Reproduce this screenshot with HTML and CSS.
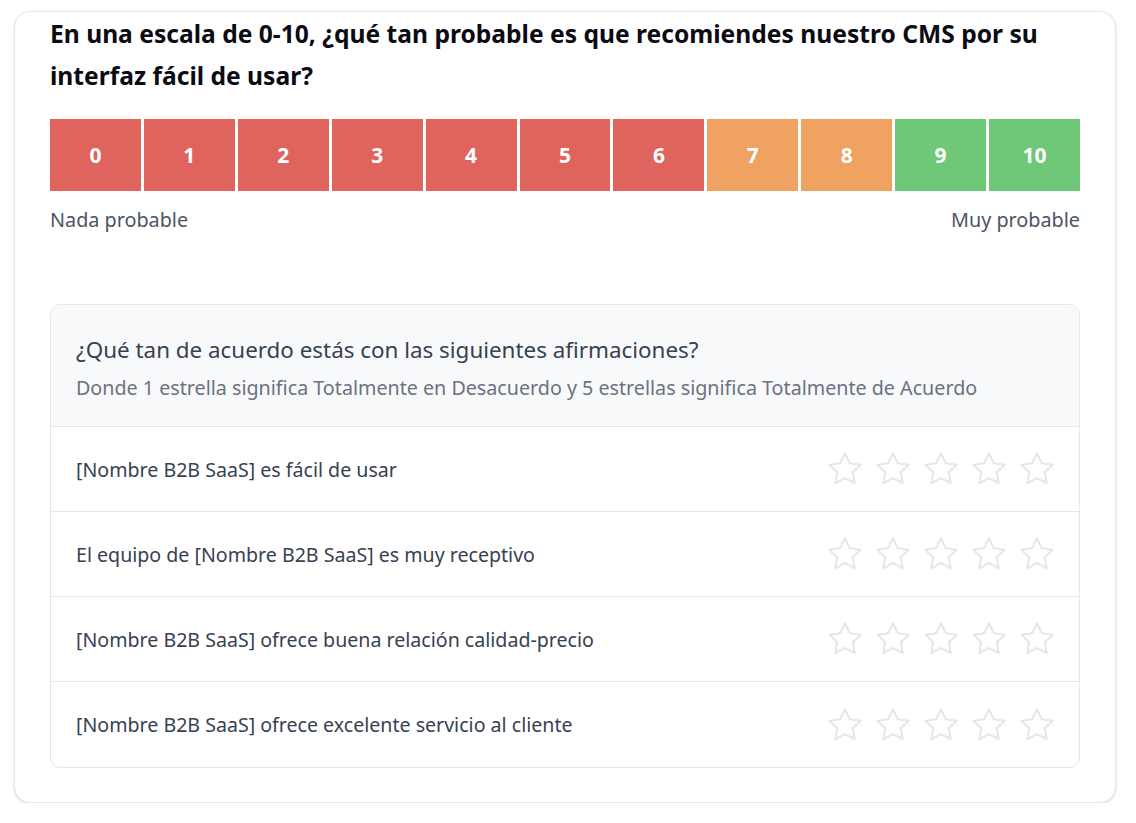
FILE: index.html
```html
<!DOCTYPE html>
<html lang="es">
<head>
<meta charset="utf-8">
<link rel="stylesheet" href="styles.css">
</head>
<body>
<div class="card">
  <h1 class="title">En una escala de 0-10, ¿qué tan probable es que recomiendes nuestro CMS por su interfaz fácil de usar?</h1>
  <div class="scale">
    <button class="score red">0</button>
    <button class="score red">1</button>
    <button class="score red">2</button>
    <button class="score red">3</button>
    <button class="score red">4</button>
    <button class="score red">5</button>
    <button class="score red">6</button>
    <button class="score orange">7</button>
    <button class="score orange">8</button>
    <button class="score green">9</button>
    <button class="score green">10</button>
  </div>
  <div class="scale-labels">
    <span>Nada probable</span>
    <span>Muy probable</span>
  </div>

  <div class="matrix">
    <div class="matrix-head">
      <div class="matrix-title">¿Qué tan de acuerdo estás con las siguientes afirmaciones?</div>
      <div class="matrix-sub">Donde 1 estrella significa Totalmente en Desacuerdo y 5 estrellas significa Totalmente de Acuerdo</div>
    </div>
    <div class="row">
      <span class="row-text">[Nombre B2B SaaS] es fácil de usar</span>
      <div class="stars">
        <svg class="star" viewBox="0 0 24 24"><path d="M12 2.6l2.9 5.9 6.5.9-4.7 4.6 1.1 6.5L12 17.4l-5.8 3.1 1.1-6.5-4.7-4.6 6.5-.9z"/></svg>
        <svg class="star" viewBox="0 0 24 24"><path d="M12 2.6l2.9 5.9 6.5.9-4.7 4.6 1.1 6.5L12 17.4l-5.8 3.1 1.1-6.5-4.7-4.6 6.5-.9z"/></svg>
        <svg class="star" viewBox="0 0 24 24"><path d="M12 2.6l2.9 5.9 6.5.9-4.7 4.6 1.1 6.5L12 17.4l-5.8 3.1 1.1-6.5-4.7-4.6 6.5-.9z"/></svg>
        <svg class="star" viewBox="0 0 24 24"><path d="M12 2.6l2.9 5.9 6.5.9-4.7 4.6 1.1 6.5L12 17.4l-5.8 3.1 1.1-6.5-4.7-4.6 6.5-.9z"/></svg>
        <svg class="star" viewBox="0 0 24 24"><path d="M12 2.6l2.9 5.9 6.5.9-4.7 4.6 1.1 6.5L12 17.4l-5.8 3.1 1.1-6.5-4.7-4.6 6.5-.9z"/></svg>
      </div>
    </div>
    <div class="row">
      <span class="row-text">El equipo de [Nombre B2B SaaS] es muy receptivo</span>
      <div class="stars">
        <svg class="star" viewBox="0 0 24 24"><path d="M12 2.6l2.9 5.9 6.5.9-4.7 4.6 1.1 6.5L12 17.4l-5.8 3.1 1.1-6.5-4.7-4.6 6.5-.9z"/></svg>
        <svg class="star" viewBox="0 0 24 24"><path d="M12 2.6l2.9 5.9 6.5.9-4.7 4.6 1.1 6.5L12 17.4l-5.8 3.1 1.1-6.5-4.7-4.6 6.5-.9z"/></svg>
        <svg class="star" viewBox="0 0 24 24"><path d="M12 2.6l2.9 5.9 6.5.9-4.7 4.6 1.1 6.5L12 17.4l-5.8 3.1 1.1-6.5-4.7-4.6 6.5-.9z"/></svg>
        <svg class="star" viewBox="0 0 24 24"><path d="M12 2.6l2.9 5.9 6.5.9-4.7 4.6 1.1 6.5L12 17.4l-5.8 3.1 1.1-6.5-4.7-4.6 6.5-.9z"/></svg>
        <svg class="star" viewBox="0 0 24 24"><path d="M12 2.6l2.9 5.9 6.5.9-4.7 4.6 1.1 6.5L12 17.4l-5.8 3.1 1.1-6.5-4.7-4.6 6.5-.9z"/></svg>
      </div>
    </div>
    <div class="row">
      <span class="row-text">[Nombre B2B SaaS] ofrece buena relación calidad-precio</span>
      <div class="stars">
        <svg class="star" viewBox="0 0 24 24"><path d="M12 2.6l2.9 5.9 6.5.9-4.7 4.6 1.1 6.5L12 17.4l-5.8 3.1 1.1-6.5-4.7-4.6 6.5-.9z"/></svg>
        <svg class="star" viewBox="0 0 24 24"><path d="M12 2.6l2.9 5.9 6.5.9-4.7 4.6 1.1 6.5L12 17.4l-5.8 3.1 1.1-6.5-4.7-4.6 6.5-.9z"/></svg>
        <svg class="star" viewBox="0 0 24 24"><path d="M12 2.6l2.9 5.9 6.5.9-4.7 4.6 1.1 6.5L12 17.4l-5.8 3.1 1.1-6.5-4.7-4.6 6.5-.9z"/></svg>
        <svg class="star" viewBox="0 0 24 24"><path d="M12 2.6l2.9 5.9 6.5.9-4.7 4.6 1.1 6.5L12 17.4l-5.8 3.1 1.1-6.5-4.7-4.6 6.5-.9z"/></svg>
        <svg class="star" viewBox="0 0 24 24"><path d="M12 2.6l2.9 5.9 6.5.9-4.7 4.6 1.1 6.5L12 17.4l-5.8 3.1 1.1-6.5-4.7-4.6 6.5-.9z"/></svg>
      </div>
    </div>
    <div class="row">
      <span class="row-text">[Nombre B2B SaaS] ofrece excelente servicio al cliente</span>
      <div class="stars">
        <svg class="star" viewBox="0 0 24 24"><path d="M12 2.6l2.9 5.9 6.5.9-4.7 4.6 1.1 6.5L12 17.4l-5.8 3.1 1.1-6.5-4.7-4.6 6.5-.9z"/></svg>
        <svg class="star" viewBox="0 0 24 24"><path d="M12 2.6l2.9 5.9 6.5.9-4.7 4.6 1.1 6.5L12 17.4l-5.8 3.1 1.1-6.5-4.7-4.6 6.5-.9z"/></svg>
        <svg class="star" viewBox="0 0 24 24"><path d="M12 2.6l2.9 5.9 6.5.9-4.7 4.6 1.1 6.5L12 17.4l-5.8 3.1 1.1-6.5-4.7-4.6 6.5-.9z"/></svg>
        <svg class="star" viewBox="0 0 24 24"><path d="M12 2.6l2.9 5.9 6.5.9-4.7 4.6 1.1 6.5L12 17.4l-5.8 3.1 1.1-6.5-4.7-4.6 6.5-.9z"/></svg>
        <svg class="star" viewBox="0 0 24 24"><path d="M12 2.6l2.9 5.9 6.5.9-4.7 4.6 1.1 6.5L12 17.4l-5.8 3.1 1.1-6.5-4.7-4.6 6.5-.9z"/></svg>
      </div>
    </div>
  </div>
</div>
</body>
</html>
```
FILE: styles.css
```css
* { box-sizing: border-box; }
html, body { background: #ffffff; }
body {
  margin: 0;
  padding: 11px 20px 0 14px;
  font-family: "Noto Sans", "Open Sans", sans-serif;
  color: #111111;
}
.card {
  width: 1102px;
  border: 1px solid #e5e7eb;
  border-radius: 16px;
  box-shadow: 0 1px 3px rgba(0,0,0,0.10), 0 1px 2px rgba(0,0,0,0.06);
  padding: 1px 35px 34px 35px;
  background: #fff;
}
.title {
  margin: 0;
  font-size: 24.6px;
  font-weight: 700;
  line-height: 42px;
  color: #0b0b14;
}
.scale {
  display: flex;
  gap: 3px;
  margin-top: 22px;
}
.score {
  flex: 1 1 0;
  height: 72px;
  border: none;
  padding: 0;
  margin: 0;
  font-family: inherit;
  font-size: 21px;
  font-weight: 700;
  color: #ffffff;
  cursor: pointer;
}
.red { background: #e0645e; }
.orange { background: #efa261; }
.green { background: #6ec878; }
.scale-labels {
  display: flex;
  justify-content: space-between;
  margin-top: 15px;
  font-size: 19.8px;
  line-height: 28px;
  color: #4b5563;
}
.matrix {
  margin-top: 70px;
  border: 1px solid #e5e7eb;
  border-radius: 10px;
  overflow: hidden;
}
.matrix-head {
  background: #f8f9fb;
  padding: 29px 25px 24px 25px;
  border-bottom: 1px solid #e5e7eb;
}
.matrix-title {
  font-size: 22.4px;
  line-height: 32px;
  color: #374151;
}
.matrix-sub {
  margin-top: 8px;
  font-size: 19.7px;
  line-height: 28px;
  color: #6b7280;
}
.row {
  display: flex;
  align-items: center;
  justify-content: space-between;
  height: 85px;
  padding: 0 22px 0 25px;
  border-bottom: 1px solid #e5e7eb;
}
.row:last-child { border-bottom: none; }
.row-text {
  font-size: 19.6px;
  color: #374151;
}
.stars {
  display: flex;
  gap: 8px;
}
.star {
  width: 40px;
  height: 40px;
  fill: none;
  stroke: #e5e7eb;
  stroke-width: 1.25;
  stroke-linejoin: round;
}
```
